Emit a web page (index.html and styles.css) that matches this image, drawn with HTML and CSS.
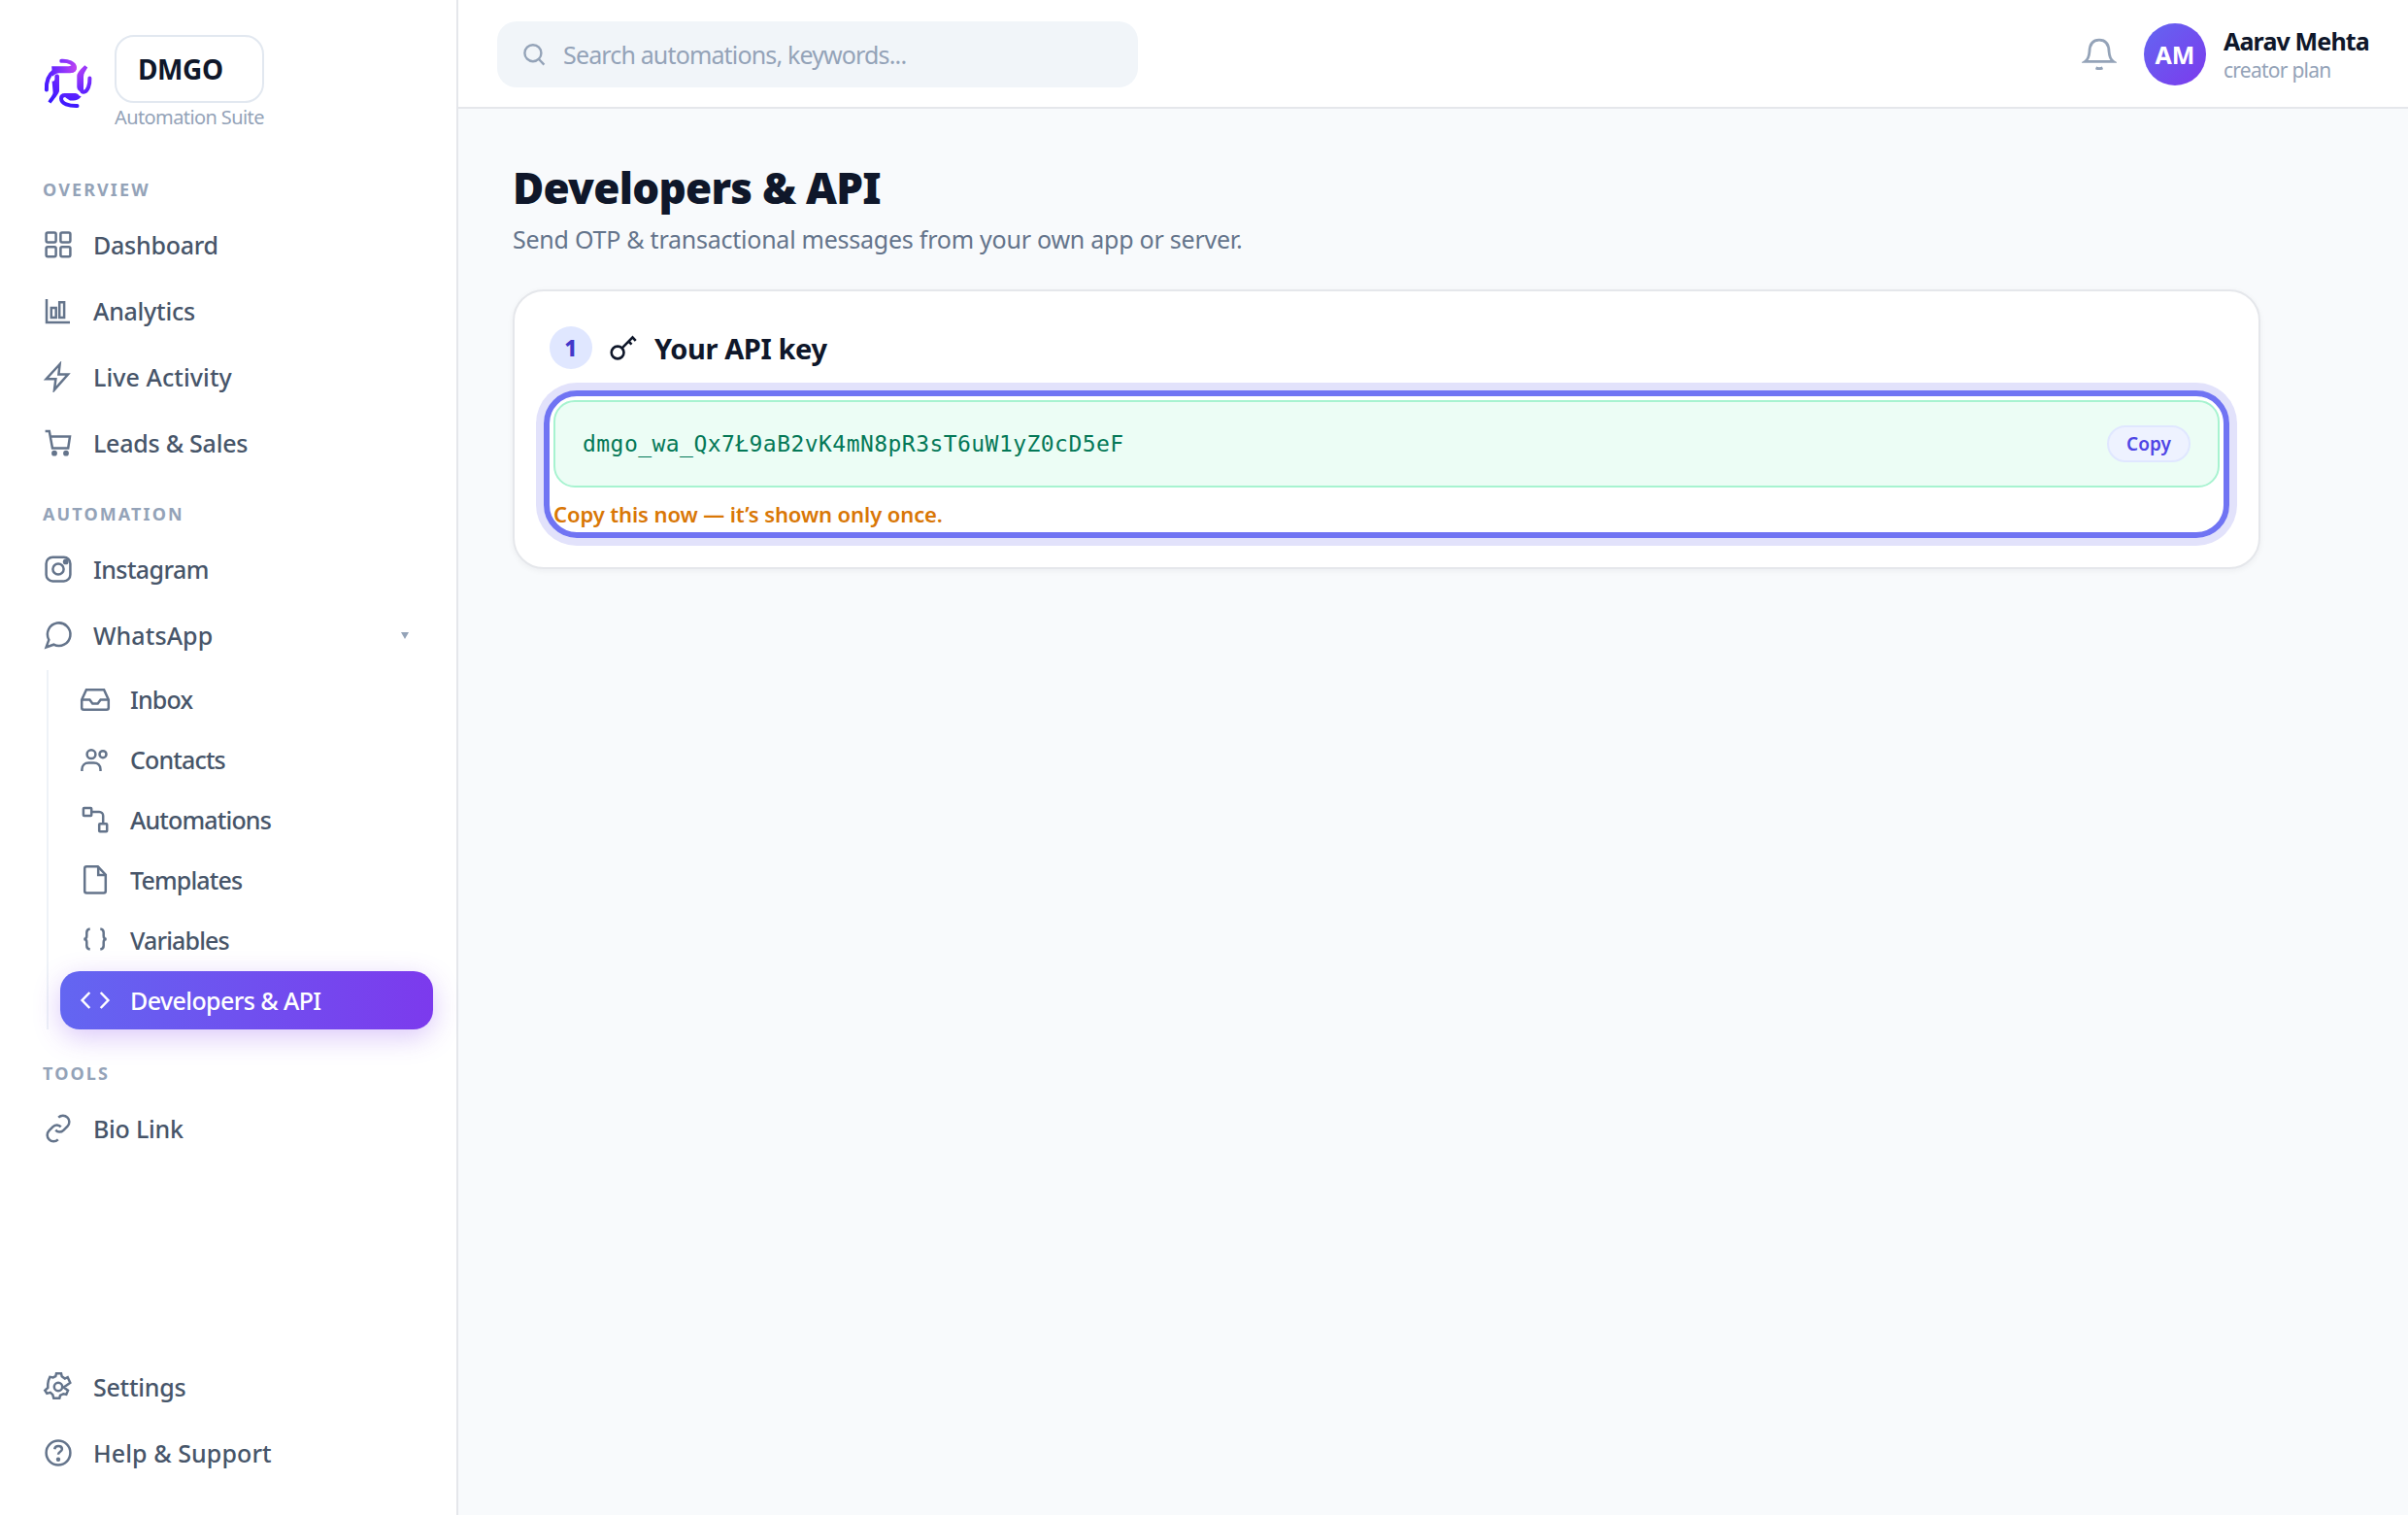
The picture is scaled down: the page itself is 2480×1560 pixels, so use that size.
FILE: index.html
```html
<!DOCTYPE html>
<html lang="en">
<head>
<meta charset="utf-8">
<title>Developers &amp; API</title>
<link rel="stylesheet" href="styles.css">
</head>
<body>
<div class="app">
  <aside class="sidebar">
    <div class="brand">
      <svg class="brand-mark" viewBox="0 0 52 56">
        <defs>
          <radialGradient id="mark" gradientUnits="userSpaceOnUse" cx="34" cy="12" r="42">
            <stop offset="0" stop-color="#c044f0"/>
            <stop offset=".28" stop-color="#9034fc"/>
            <stop offset=".62" stop-color="#6022ff"/>
            <stop offset="1" stop-color="#3818ff"/>
          </radialGradient>
        </defs>
        <g fill="none" stroke="url(#mark)" stroke-width="4" stroke-linecap="round">
          <path d="M19.300 4.800C26 4.400 33 7 33 11.600c0 2.400-1.800 3.300-4.600 3.300"/>
          <path d="M3.900 34.500C3.500 27 6 19 12.500 14.500"/>
          <path d="M48.400 22.500c.3 6.500-2 14-6.400 14.200-1.300 0-1.900-1-2-2.200"/>
          <path d="M35.500 51.100C27 51.300 19.200 49 19 43.500c0-2.300 1.500-3.500 4-3.500"/>
        </g>
        <g fill="url(#mark)">
          <path d="M9.200 10.300H25c2.200 0 4-.3 5-1.500l4.600 2C35 14.500 33 17.300 28 17.300H17c-3 0-4.500 1.500-7 3.500z"/>
          <path d="M17 20.500v15.200c0 2.400-6.500 9.800-8.600 12.900l-3-2.200c2.200-3.600 5.200-6.600 5.200-9.200l-1-11.600c2 .2 2.700-.8 2.800-2.400v-3c.3-2.200 4.400-2.200 4.600.3z"/>
          <path d="M43.200 9.200l3 2.400c-2 3.400-4.200 6.200-4.200 9.400v13l-2.800 2.600c-2-1-3.900-2.400-3.900-5.100V20.200c0-3.600 5-8 7.900-11z"/>
          <path d="M22 38h10c2.400 0 4.500.4 5.500 2.600l2.200.6c-2.200 3-4.800 4.200-8.200 4.200H28l-4.500-3z"/>
        </g>
      </svg>
      <div class="brand-text">
        <div class="brand-name">DMGO</div>
        <div class="brand-caption">Automation Suite</div>
      </div>
    </div>

    <nav class="nav">
      <div class="nav-label">OVERVIEW</div>
      <a class="nav-item"><svg class="icon" viewBox="0 0 32 32"><rect x="3.600" y="3.400" width="10" height="10" rx="1.600"/><rect x="18.400" y="3.400" width="10" height="10" rx="1.600"/><rect x="3.600" y="18.200" width="10" height="10" rx="1.600"/><rect x="18.400" y="18.200" width="10" height="10" rx="1.600"/></svg>Dashboard</a>
      <a class="nav-item"><svg class="icon" viewBox="0 0 32 32"><path d="M4 4v24h24"/><path d="M8.800 12.900h4.900v10H8.800zM17.200 7.300h4.900v15.600h-4.900z"/></svg>Analytics</a>
      <a class="nav-item loose"><svg class="icon" viewBox="0 0 32 32"><path d="M17.600 3 3.600 18.200h9.800l-1.400 11.200L26 13.600h-9.600z"/></svg>Live Activity</a>
      <a class="nav-item"><svg class="icon" viewBox="0 0 32 32"><path d="M2.600 4h4.200l3.200 17.400h16.200l1.800-12H7.800"/><circle class="solid" cx="12" cy="26.700" r="2.900"/><circle class="solid" cx="24" cy="26.700" r="2.900"/></svg>Leads &amp; Sales</a>

      <div class="nav-label automation">AUTOMATION</div>
      <a class="nav-item tight"><svg class="icon" viewBox="0 0 32 32"><rect x="3.600" y="3.800" width="24.800" height="24.600" rx="6.600"/><circle cx="16" cy="16" r="5.600"/><circle class="solid" cx="23.700" cy="8.400" r="2.900"/></svg>Instagram</a>
      <a class="nav-item loose"><svg class="icon" viewBox="0 0 32 32"><path d="M6.300 20.800A11.800 11.800 0 1 1 11.300 25.700L3.600 28.400z"/></svg>WhatsApp<span class="caret"></span></a>
      <div class="subnav">
        <a class="sub-item"><svg class="icon" viewBox="0 0 32 32"><path d="M2.200 16.500 6.900 6.200h18.200l4.700 10.300v8.300a2 2 0 0 1-2 2H4.200a2 2 0 0 1-2-2z"/><path d="M2.200 16.500h8.200l2.900 3.900h5.400l2.900-3.900h8.200"/></svg>Inbox</a>
        <a class="sub-item"><svg class="icon" viewBox="0 0 32 32"><circle cx="12" cy="10.700" r="4.400"/><circle cx="24" cy="10.700" r="3.500"/><path d="M2.400 28v-1.700c0-4.200 3-6.900 6.800-6.900h5.400c3.800 0 6.900 2.700 6.900 6.900V28"/></svg>Contacts</a>
        <a class="sub-item"><svg class="icon" viewBox="0 0 32 32"><rect x="3.900" y="3.900" width="8.300" height="8.100" rx=".8"/><rect x="20.200" y="20.200" width="8" height="8" rx=".8"/><path d="M12.200 8h8a4 4 0 0 1 4 4v8.200"/></svg>Automations</a>
        <a class="sub-item"><svg class="icon" viewBox="0 0 32 32"><path d="M7.200 2.300h11.600l8 8.400v16.800a2 2 0 0 1-2 2H7.200a2 2 0 0 1-2-2V4.300a2 2 0 0 1 2-2z"/><path d="M19.200 2.500v8.400h7.600"/></svg>Templates</a>
        <a class="sub-item"><svg class="icon" viewBox="0 0 32 32"><path d="M10.700 4.400C8.400 4.600 7.300 5.900 7.300 8.200v3.600c0 1.900-.9 3.100-3 3.100 2.100 0 3 1.200 3 3.100v3.700c0 2.300 1.100 3.600 3.400 3.900M21.300 4.400c2.300.2 3.400 1.500 3.400 3.800v3.600c0 1.900.9 3.100 3 3.100-2.100 0-3 1.200-3 3.100v3.700c0 2.300-1.100 3.600-3.400 3.900"/></svg>Variables</a>
        <a class="sub-item active"><svg class="icon" viewBox="0 0 32 32"><path d="M10.300 8 2.600 16l7.700 8M21.700 8l7.700 8-7.700 8"/></svg>Developers &amp; API</a>
      </div>

      <div class="nav-label tools">TOOLS</div>
      <a class="nav-item"><svg class="icon" viewBox="0 0 32 32"><path d="M16.200 4.700c2.700-2.600 6.700-2.400 9.200 0s2.600 6.400.2 8.900l-4.200 4.200c-2.600 2.500-6 2.400-8.100-.2"/><path d="M15.800 27.300c-2.700 2.600-6.700 2.400-9.200 0s-2.600-6.400-.2-8.900l4.200-4.200c2.600-2.500 6-2.400 8.100.2"/></svg>Bio Link</a>
    </nav>

    <nav class="nav-footer">
      <a class="nav-item"><svg class="icon" viewBox="0 0 32 32"><path d="M14 2.300h5l.7 3 3.100 2.300 2.900-1.400 2.600 5.600-3.400 2.400-3.400 2.300 4.500 3.300-1.700 4.100-3-.7-3.300 1.700-.7 2.900h-6l-1-3.700-2.500-2.200-3.500 1-2-3.100L5.300 17v-4l.6-3.500 1.500-3.700 3.300.6 2.600-1.200z"/><circle cx="16" cy="16" r="4.200"/></svg>Settings</a>
      <a class="nav-item loose"><svg class="icon" viewBox="0 0 32 32"><circle cx="16" cy="16" r="12.400"/><path d="M12.200 12.200c.4-2.100 1.900-3.100 3.900-3.100 2.200 0 3.800 1.200 3.800 3.100 0 2.600-3.900 2.500-3.900 5.500"/><circle class="solid" cx="16" cy="22.700" r="2.200"/></svg>Help &amp; Support</a>
    </nav>
  </aside>

  <div class="main">
    <header class="topbar">
      <div class="search">
        <svg class="search-icon" viewBox="0 0 24 24"><circle cx="10.900" cy="10.700" r="8.500"/><path d="m17 17 5.400 5.600"/></svg>
        <span>Search automations, keywords...</span>
      </div>
      <div class="account">
        <svg class="bell" viewBox="0 0 36 36"><path d="M3.500 25.300C6.400 23.300 7.500 20.500 7.900 15.500 8.100 7.500 11.700 3.200 18 3.200s9.900 4.300 10.100 12.300c.4 5 1.500 7.800 4.400 9.800z"/><path class="clapper" d="M14.500 31.900c2.300 1 4.700 1 7 0"/></svg>
        <div class="avatar">AM</div>
        <div class="person">
          <div class="person-name">Aarav Mehta</div>
          <div class="person-plan">creator plan</div>
        </div>
      </div>
    </header>

    <main class="content">
      <h1 class="title">Developers &amp; API</h1>
      <p class="subtitle">Send OTP &amp; transactional messages from your own app or server.</p>

      <section class="card">
        <div class="card-head">
          <span class="step">1</span>
          <svg class="key-icon" viewBox="0 0 32 32"><circle cx="10.100" cy="21" r="6.400"/><path d="M14.700 16.300 25.500 5.300l3.200 3.500M21.400 9.500l3.100 3.100"/></svg>
          <h2 class="card-title">Your API key</h2>
        </div>
        <div class="spotlight">
          <div class="key-box">
            <code class="key">dmgo_wa_Qx7Ł9aB2vK4mN8pR3sT6uW1yZ0cD5eF</code>
            <button class="copy">Copy</button>
          </div>
          <p class="notice">Copy this now — it’s shown only once.</p>
        </div>
      </section>
    </main>
  </div>
</div>
</body>
</html>
```
FILE: styles.css
```css
* { box-sizing: border-box; }

body {
  margin: 0;
  font-family: "Noto Sans", "Open Sans", sans-serif;
  color: #0f172a;
  background: #f8fafc;
}

.app { display: flex; height: 1560px; }

/* Sidebar */
.sidebar {
  width: 472px;
  flex: none;
  display: flex;
  flex-direction: column;
  padding: 36px 24px 32px;
  background: #fff;
  border-right: 2px solid #e5e7eb;
}

.brand { display: flex; align-items: center; gap: 22px; height: 100px; padding-left: 20px; }
.brand-mark { width: 52px; height: 56px; }
.brand-name {
  width: 154px;
  height: 70px;
  padding-left: 22px;
  border: 2px solid #e2e8f0;
  border-radius: 20px;
  font-size: 28px;
  line-height: 67px;
  font-weight: 700;
  letter-spacing: -.4px;
}
.brand-caption {
  height: 30px;
  line-height: 29px;
  font-size: 20px;
  letter-spacing: -.6px;
  color: #94a3b8;
  white-space: nowrap;
}

.nav { display: flex; flex-direction: column; gap: 4px; padding-top: 50px; }
.nav-label {
  height: 20px;
  margin-bottom: 10px;
  padding-left: 20px;
  font-size: 18px;
  line-height: 19px;
  font-weight: 700;
  letter-spacing: 2.1px;
  color: #94a3b8;
}
.nav-label.automation { margin-top: 28px; }
.nav-label.tools { margin-top: 32px; }

.nav-item, .sub-item {
  display: flex;
  align-items: center;
  gap: 20px;
  font-size: 25px;
  font-weight: 500;
  color: #475569;
  white-space: nowrap;
}
.nav-item { height: 64px; padding: 0 20px; letter-spacing: -.25px; }
.nav-item.tight { letter-spacing: -.6px; }
.nav-item.loose { letter-spacing: .08px; }

.icon {
  width: 32px;
  height: 32px;
  flex: none;
  fill: none;
  stroke: #64748b;
  stroke-width: 2.5;
}
.icon .solid { fill: #64748b; stroke: none; }

.caret {
  margin: 0 5px 0 auto;
  border: 4px solid transparent;
  border-top: 7px solid #94a3b8;
  border-bottom: 0;
}

.subnav {
  display: flex;
  flex-direction: column;
  gap: 2px;
  margin-left: 24px;
  padding-left: 12px;
  border-left: 2px solid #eef2f7;
}
.sub-item { height: 60px; padding: 0 20px; letter-spacing: -.85px; border-radius: 20px; }
.sub-item.active {
  letter-spacing: -.6px;
  color: #fff;
  background: linear-gradient(90deg, #6366f1, #7c3aed);
  box-shadow: 0 8px 28px rgba(124, 58, 237, .28);
}
.sub-item.active .icon { stroke: #fff; }

.nav-footer { display: flex; flex-direction: column; gap: 4px; margin-top: auto; }

/* Top bar */
.main { flex: 1; display: flex; flex-direction: column; }
.topbar {
  display: flex;
  align-items: center;
  justify-content: space-between;
  height: 112px;
  padding: 2px 40px 0;
  background: #fff;
  border-bottom: 2px solid #e5e7eb;
}
.search {
  display: flex;
  align-items: center;
  gap: 18px;
  width: 660px;
  height: 68px;
  padding-left: 26px;
  border-radius: 20px;
  background: #f1f5f9;
  font-size: 25px;
  letter-spacing: -.85px;
  color: #94a3b8;
}
.search-icon { width: 24px; height: 24px; fill: none; stroke: #94a3b8; stroke-width: 2.4; }

.account { display: flex; align-items: center; }
.bell { width: 36px; height: 36px; margin-right: 28px; fill: none; stroke: #94a3b8; stroke-width: 2.8; }
.avatar {
  width: 64px;
  height: 64px;
  margin-right: 18px;
  border-radius: 50%;
  background: linear-gradient(135deg, #6366f1, #7c3aed);
  color: #fff;
  font-size: 25px;
  line-height: 65px;
  font-weight: 700;
  text-align: center;
}
.person { width: 150px; padding-top: 1px; white-space: nowrap; }
.person-name { font-size: 25px; line-height: 30px; font-weight: 700; letter-spacing: -.85px; }
.person-plan { font-size: 21px; line-height: 30px; letter-spacing: -.75px; color: #94a3b8; }

/* Page content */
.content { padding: 54px 56px; }
.title { margin: 0; font-size: 44px; line-height: 54px; font-weight: 900; letter-spacing: -.75px; }
.subtitle { margin: 8px 0 0; font-size: 25px; line-height: 36px; letter-spacing: -.24px; color: #64748b; }

.card {
  width: 1800px;
  margin-top: 34px;
  padding: 36px 36px 30px;
  border: 2px solid #e5e7eb;
  border-radius: 32px;
  background: #fff;
  box-shadow: 0 2px 6px rgba(15, 23, 42, .05);
}
.card-head { display: flex; align-items: center; gap: 16px; height: 44px; }
.step {
  width: 44px;
  height: 44px;
  border-radius: 50%;
  background: #e0e7ff;
  color: #4338ca;
  font-size: 23px;
  line-height: 45px;
  font-weight: 800;
  text-align: center;
}
.key-icon { width: 32px; height: 32px; fill: none; stroke: #0f172a; stroke-width: 2.6; }
.card-title { margin: 2px 0 0; font-size: 29px; line-height: 44px; font-weight: 700; letter-spacing: -.4px; }

.spotlight {
  height: 152px;
  margin: 22px -6px 0;
  padding: 4px;
  border: 6px solid #7074f3;
  border-radius: 34px;
  box-shadow: 0 0 0 8px #e2e2fb;
}
.key-box {
  display: flex;
  align-items: center;
  justify-content: space-between;
  height: 90px;
  padding: 0 28px;
  border: 2px solid #a7f3d0;
  border-radius: 22px;
  background: #ecfdf5;
}
.key { font: 23px "DejaVu Sans Mono", monospace; letter-spacing: .45px; color: #047857; }
.copy {
  width: 86px;
  height: 38px;
  padding: 0;
  border: 2px solid #e0e7ff;
  border-radius: 19px;
  background: #eef2ff;
  color: #4f46e5;
  font: 600 19px/33px "Noto Sans", sans-serif;
}
.notice { margin: 13px 0 0; font-size: 22px; line-height: 28px; font-weight: 600; letter-spacing: -.1px; color: #d97706; }
```
